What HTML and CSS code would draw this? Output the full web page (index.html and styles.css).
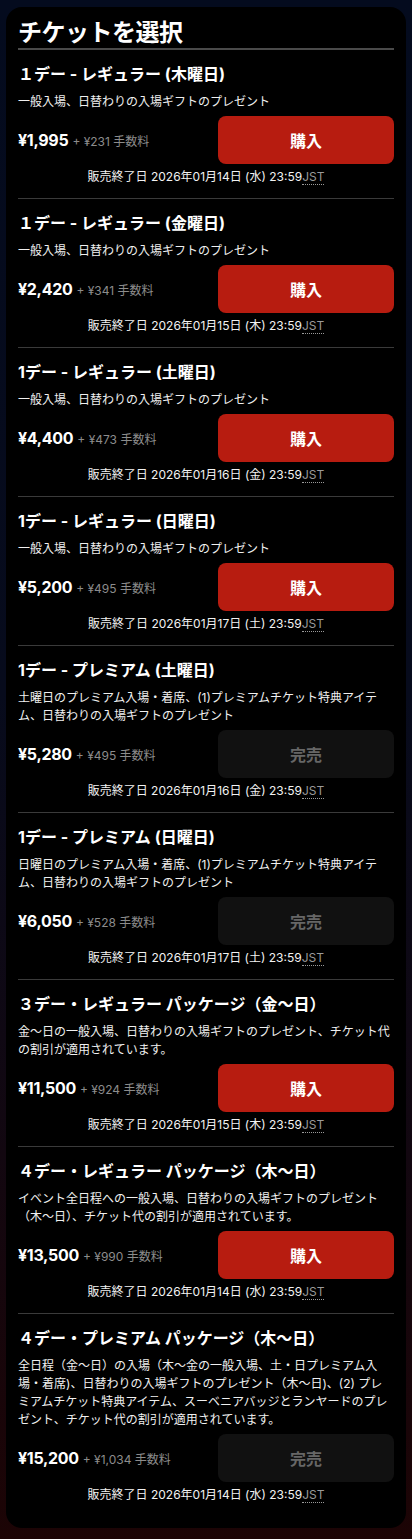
FILE: index.html
```html
<!DOCTYPE html>
<html lang="ja">
<head>
<meta charset="utf-8">
<title>チケットを選択</title>
<link rel="stylesheet" href="styles.css">
</head>
<body>
<main class="card">
  <h1 class="heading">チケットを選択</h1>

  <section class="ticket">
    <h2 class="t-title">１デー - レギュラー (木曜日)</h2>
    <p class="t-desc">一般入場、日替わりの入場ギフトのプレゼント</p>
    <div class="t-row">
      <div class="price"><span class="amount">¥1,995</span> <span class="fee">+ ¥231 手数料</span></div>
      <button class="btn buy">購入</button>
    </div>
    <p class="t-end">販売終了日 2026年01月14日 (水) 23:59<abbr class="tz">JST</abbr></p>
  </section>

  <section class="ticket">
    <h2 class="t-title">１デー - レギュラー (金曜日)</h2>
    <p class="t-desc">一般入場、日替わりの入場ギフトのプレゼント</p>
    <div class="t-row">
      <div class="price"><span class="amount">¥2,420</span> <span class="fee">+ ¥341 手数料</span></div>
      <button class="btn buy">購入</button>
    </div>
    <p class="t-end">販売終了日 2026年01月15日 (木) 23:59<abbr class="tz">JST</abbr></p>
  </section>

  <section class="ticket">
    <h2 class="t-title">1デー - レギュラー (土曜日)</h2>
    <p class="t-desc">一般入場、日替わりの入場ギフトのプレゼント</p>
    <div class="t-row">
      <div class="price"><span class="amount">¥4,400</span> <span class="fee">+ ¥473 手数料</span></div>
      <button class="btn buy">購入</button>
    </div>
    <p class="t-end">販売終了日 2026年01月16日 (金) 23:59<abbr class="tz">JST</abbr></p>
  </section>

  <section class="ticket">
    <h2 class="t-title">1デー - レギュラー (日曜日)</h2>
    <p class="t-desc">一般入場、日替わりの入場ギフトのプレゼント</p>
    <div class="t-row">
      <div class="price"><span class="amount">¥5,200</span> <span class="fee">+ ¥495 手数料</span></div>
      <button class="btn buy">購入</button>
    </div>
    <p class="t-end">販売終了日 2026年01月17日 (土) 23:59<abbr class="tz">JST</abbr></p>
  </section>

  <section class="ticket">
    <h2 class="t-title">1デー - プレミアム (土曜日)</h2>
    <p class="t-desc">土曜日のプレミアム入場・着席、(1)プレミアムチケット特典アイテム、日替わりの入場ギフトのプレゼント</p>
    <div class="t-row">
      <div class="price"><span class="amount">¥5,280</span> <span class="fee">+ ¥495 手数料</span></div>
      <button class="btn sold" disabled>完売</button>
    </div>
    <p class="t-end">販売終了日 2026年01月16日 (金) 23:59<abbr class="tz">JST</abbr></p>
  </section>

  <section class="ticket">
    <h2 class="t-title">1デー - プレミアム (日曜日)</h2>
    <p class="t-desc">日曜日のプレミアム入場・着席、(1)プレミアムチケット特典アイテム、日替わりの入場ギフトのプレゼント</p>
    <div class="t-row">
      <div class="price"><span class="amount">¥6,050</span> <span class="fee">+ ¥528 手数料</span></div>
      <button class="btn sold" disabled>完売</button>
    </div>
    <p class="t-end">販売終了日 2026年01月17日 (土) 23:59<abbr class="tz">JST</abbr></p>
  </section>

  <section class="ticket">
    <h2 class="t-title">３デー・レギュラー パッケージ（金〜日）</h2>
    <p class="t-desc">金〜日の一般入場、日替わりの入場ギフトのプレゼント、チケット代の割引が適用されています。</p>
    <div class="t-row">
      <div class="price"><span class="amount">¥11,500</span> <span class="fee">+ ¥924 手数料</span></div>
      <button class="btn buy">購入</button>
    </div>
    <p class="t-end">販売終了日 2026年01月15日 (木) 23:59<abbr class="tz">JST</abbr></p>
  </section>

  <section class="ticket">
    <h2 class="t-title">４デー・レギュラー パッケージ（木〜日）</h2>
    <p class="t-desc">イベント全日程への一般入場、日替わりの入場ギフトのプレゼント（木〜日）、チケット代の割引が適用されています。</p>
    <div class="t-row">
      <div class="price"><span class="amount">¥13,500</span> <span class="fee">+ ¥990 手数料</span></div>
      <button class="btn buy">購入</button>
    </div>
    <p class="t-end">販売終了日 2026年01月14日 (水) 23:59<abbr class="tz">JST</abbr></p>
  </section>

  <section class="ticket">
    <h2 class="t-title">４デー・プレミアム パッケージ（木〜日）</h2>
    <p class="t-desc">全日程（金〜日）の入場（木〜金の一般入場、土・日プレミアム入場・着席)、日替わりの入場ギフトのプレゼント（木〜日)、(2) プレミアムチケット特典アイテム、スーベニアバッジとランヤードのプレゼント、チケット代の割引が適用されています。</p>
    <div class="t-row">
      <div class="price"><span class="amount">¥15,200</span> <span class="fee">+ ¥1,034 手数料</span></div>
      <button class="btn sold" disabled>完売</button>
    </div>
    <p class="t-end">販売終了日 2026年01月14日 (水) 23:59<abbr class="tz">JST</abbr></p>
  </section>
</main>
</body>
</html>
```

FILE: styles.css
```css
* {
  box-sizing: border-box;
}

html, body {
  margin: 0;
  padding: 0;
}

body {
  min-height: 100vh;
  padding: 7px 6px 11px;
  background: linear-gradient(180deg, #040b1e 0%, #070b1c 45%, #120710 75%, #1c0405 100%);
  font-family: "Inter", "Noto Sans CJK JP", sans-serif;
  color: #ffffff;
}

.card {
  background: #000000;
  border-radius: 16px;
  padding: 12px 12px 12px;
}

.heading {
  margin: 0;
  font-size: 24px;
  line-height: 28px;
  font-weight: 700;
  padding-bottom: 1px;
  border-bottom: 2px solid #4a4a4a;
  letter-spacing: -0.5px;
}

.ticket {
  padding: 12px 0 12px;
}

.ticket + .ticket {
  border-top: 1px solid #3a3a3a;
}

.t-title {
  margin: 0;
  font-size: 16px;
  line-height: 24px;
  font-weight: 700;
}

.t-desc {
  margin: 7px 0 0;
  font-size: 12px;
  line-height: 18px;
  color: #f0f0f0;
}

.t-row {
  margin-top: 5px;
  display: flex;
  align-items: center;
  justify-content: space-between;
}

.price {
  display: flex;
  align-items: baseline;
  gap: 4px;
}

.amount {
  font-size: 16px;
  font-weight: 700;
  letter-spacing: -0.3px;
}

.fee {
  font-size: 12px;
  color: #8c8c8c;
}

.btn {
  width: 176px;
  height: 48px;
  border: none;
  border-radius: 8px;
  font-family: "Inter", "Noto Sans CJK JP", sans-serif;
  font-size: 16px;
  font-weight: 700;
}

.buy {
  background: #b71c10;
  color: #ffffff;
}

.sold {
  background: #111111;
  color: #666666;
}

.t-end {
  margin: 3px 0 0;
  font-size: 12px;
  line-height: 19px;
  text-align: center;
  color: #f2f2f2;
}

.tz {
  color: #9a9a9a;
  text-decoration: none;
  border-bottom: 1px dotted #9a9a9a;
}
```
